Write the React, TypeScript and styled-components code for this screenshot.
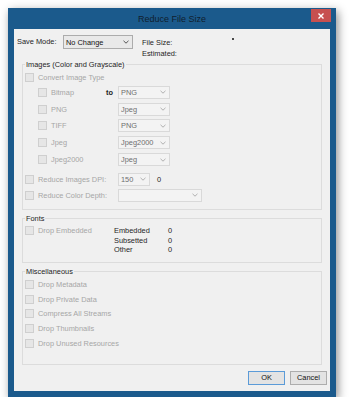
import React from "react";
import styled, { createGlobalStyle } from "styled-components";

const GlobalStyle = createGlobalStyle`
  html, body {
    margin: 0;
    padding: 0;
    background: #ffffff;
  }
  body {
    font-family: "Liberation Sans", Arial, sans-serif;
    font-size: 7.4px;
    color: #1e1e1e;
  }
`;

const Page = styled.div`
  padding: 8px 0 0 8px;
`;

const Window = styled.div`
  width: 328px;
  box-sizing: border-box;
  background: #1b5a8c;
  padding: 0 6px 6px 6px;
  box-shadow: 2px 3px 9px rgba(0, 0, 0, 0.45);
`;

const TitleBar = styled.div`
  position: relative;
  height: 21px;
  display: flex;
  align-items: center;
  justify-content: center;
`;

const Title = styled.span`
  font-size: 9px;
  color: #10202e;
  padding-top: 1px;
`;

const CloseButton = styled.div`
  position: absolute;
  top: 1px;
  right: -1px;
  width: 20px;
  height: 13px;
  background: #c75050;
  display: flex;
  align-items: center;
  justify-content: center;
`;

const Client = styled.div`
  height: 362px;
  box-sizing: border-box;
  background: #f0f0f0;
  padding: 6px 3px 6px 3px;
  display: flex;
  flex-direction: column;
`;

const TopRow = styled.div`
  height: 24px;
  display: flex;
  align-items: flex-start;
`;

const FieldLabel = styled.span`
  width: 46px;
  line-height: 14px;
`;

const SizeColumn = styled.div`
  margin-left: 9px;
  margin-top: 2px;
  width: 90px;
  display: flex;
  flex-direction: column;
`;

const SizeLine = styled.span`
  line-height: 11px;
`;

const Dot = styled.span`
  margin-top: 3px;
  width: 2px;
  height: 2px;
  border-radius: 1px;
  background: #111;
`;

const Select = styled.div<{ $w: number; $enabled?: boolean }>`
  width: ${(p) => p.$w}px;
  height: ${(p) => (p.$enabled ? 14 : 13)}px;
  box-sizing: border-box;
  border: 1px solid ${(p) => (p.$enabled ? "#acacac" : "#d9d9d9")};
  background: ${(p) => (p.$enabled ? "#e9e9e9" : "#f3f3f3")};
  color: ${(p) => (p.$enabled ? "#111" : "#6e6e6e")};
  display: flex;
  align-items: center;
  justify-content: space-between;
  padding: 0 3px 0 2px;
`;

const Group = styled.fieldset<{ $pb: number }>`
  margin: 0 5px;
  padding: 0 2px ${(p) => p.$pb}px 2px;
  border: 1px solid #dcdcdc;
  min-width: 0;
  & + & {
    margin-top: 3px;
  }
`;

const Legend = styled.legend`
  padding: 0 1px;
  line-height: 11px;
  color: #1e1e1e;
`;

const Row = styled.div<{ $h: number; $indent?: number }>`
  height: ${(p) => p.$h}px;
  display: flex;
  align-items: center;
  padding-left: ${(p) => p.$indent || 0}px;
`;

const CheckItem = styled.div<{ $w?: number }>`
  display: flex;
  align-items: center;
  width: ${(p) => (p.$w ? `${p.$w}px` : "auto")};
  color: #a6a6a6;
`;

const Box = styled.span`
  width: 9px;
  height: 9px;
  box-sizing: border-box;
  border: 1px solid #cfcfcf;
  background: #e6e6e6;
  margin-right: 4px;
  flex: none;
`;

const ToLabel = styled.span`
  width: 12px;
  font-weight: bold;
  color: #1e1e1e;
`;

const Value = styled.span`
  margin-left: 7px;
  color: #1e1e1e;
`;

const FontsBody = styled.div`
  display: flex;
  padding-top: 2px;
`;

const Stats = styled.div`
  display: grid;
  grid-template-columns: 54px auto;
  grid-auto-rows: 9.6px;
  line-height: 9.6px;
  color: #1e1e1e;
`;

const ButtonRow = styled.div`
  margin-top: 6px;
  display: flex;
  justify-content: flex-end;
  gap: 5px;
`;

const Button = styled.div<{ $default?: boolean }>`
  width: 37px;
  height: 14px;
  box-sizing: border-box;
  border: 1px solid ${(p) => (p.$default ? "#5b9bd8" : "#adadad")};
  background: #e3e3e3;
  display: flex;
  align-items: center;
  justify-content: center;
  color: #111;
`;

const Chevron = ({ color }: { color: string }) => (
  <svg width="6" height="4" viewBox="0 0 6 4">
    <path d="M0.5 0.8 L3 3.2 L5.5 0.8" fill="none" stroke={color} strokeWidth="0.9" />
  </svg>
);

const Check = ({ label, w }: { label: string; w?: number }) => (
  <CheckItem $w={w}>
    <Box />
    {label}
  </CheckItem>
);

const formats = [
  { from: "Bitmap", to: "PNG" },
  { from: "PNG", to: "Jpeg" },
  { from: "TIFF", to: "PNG" },
  { from: "Jpeg", to: "Jpeg2000" },
  { from: "Jpeg2000", to: "Jpeg" },
];

const misc = [
  "Drop Metadata",
  "Drop Private Data",
  "Compress All Streams",
  "Drop Thumbnails",
  "Drop Unused Resources",
];

export default function App() {
  return (
    <>
      <GlobalStyle />
      <Page>
        <Window>
          <TitleBar>
            <Title>Reduce File Size</Title>
            <CloseButton>
              <svg width="6" height="6" viewBox="0 0 6 6">
                <path d="M0.5 0.5 L5.5 5.5 M5.5 0.5 L0.5 5.5" stroke="#fff" strokeWidth="1.4" />
              </svg>
            </CloseButton>
          </TitleBar>
          <Client>
            <TopRow>
              <FieldLabel>Save Mode:</FieldLabel>
              <Select $w={70} $enabled>
                No Change
                <Chevron color="#444" />
              </Select>
              <SizeColumn>
                <SizeLine>File Size:</SizeLine>
                <SizeLine>Estimated:</SizeLine>
              </SizeColumn>
              <Dot />
            </TopRow>

            <Group $pb={5.7}>
              <Legend>Images (Color and Grayscale)</Legend>
              <Row $h={14}>
                <Check label="Convert Image Type" />
              </Row>
              {formats.map((f, i) => (
                <Row key={f.from} $h={16.8} $indent={13}>
                  <Check label={f.from} w={68} />
                  <ToLabel>{i === 0 ? "to" : ""}</ToLabel>
                  <Select $w={52}>
                    {f.to}
                    <Chevron color="#a8a8a8" />
                  </Select>
                </Row>
              ))}
              <Row $h={16} style={{ marginTop: 3.3 }}>
                <Check label="Reduce Images DPI:" w={93} />
                <Select $w={32}>
                  150
                  <Chevron color="#a8a8a8" />
                </Select>
                <Value>0</Value>
              </Row>
              <Row $h={16}>
                <Check label="Reduce Color Depth:" w={93} />
                <Select $w={84}>
                  <span />
                  <Chevron color="#a8a8a8" />
                </Select>
              </Row>
            </Group>

            <Group $pb={7.2}>
              <Legend>Fonts</Legend>
              <FontsBody>
                <CheckItem $w={89} style={{ height: 9.6 }}>
                  <Box />
                  Drop Embedded
                </CheckItem>
                <Stats>
                  <span>Embedded</span>
                  <span>0</span>
                  <span>Subsetted</span>
                  <span>0</span>
                  <span>Other</span>
                  <span>0</span>
                </Stats>
              </FontsBody>
            </Group>

            <Group $pb={13.25}>
              <Legend>Miscellaneous</Legend>
              {misc.map((m) => (
                <Row key={m} $h={14.75}>
                  <Check label={m} />
                </Row>
              ))}
            </Group>

            <ButtonRow>
              <Button $default>OK</Button>
              <Button>Cancel</Button>
            </ButtonRow>
          </Client>
        </Window>
      </Page>
    </>
  );
}
